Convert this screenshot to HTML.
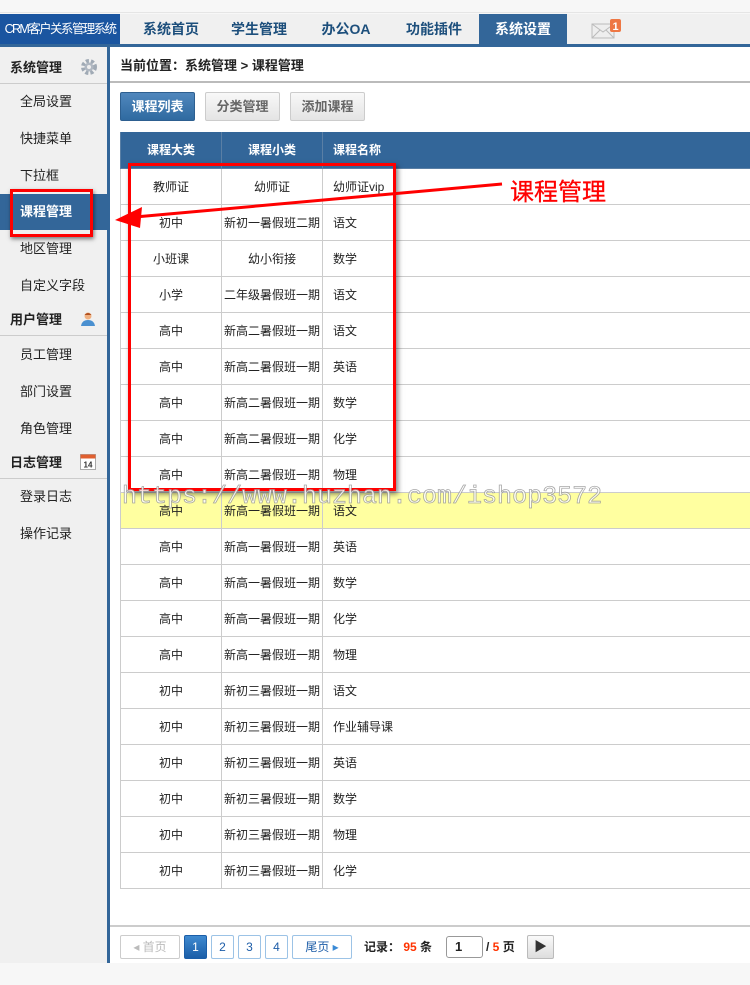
<!DOCTYPE html>
<html><head><meta charset="utf-8"><style>
*{margin:0;padding:0;box-sizing:border-box}
body{width:750px;height:985px;position:relative;background:#f7f7f7;font-family:"Liberation Sans","Noto Sans CJK SC",sans-serif;font-size:12px;color:#222;overflow:hidden}
.a{position:absolute}
.nav{left:0;top:14px;width:750px;height:30px;background:#f0f0f0}
.navb{left:0;top:44px;width:750px;height:3px;background:#336699}
.logo{left:0;top:14px;width:120px;height:30px;background:#1a55a0;color:#fff;font-size:12.5px;line-height:30px;text-align:center;letter-spacing:-1.6px;white-space:nowrap;overflow:hidden}
.ni{top:14px;height:30px;line-height:30px;font-size:14px;font-weight:bold;color:#1d4f7c;text-align:center}
.side{left:0;top:47px;width:107px;height:916px;background:#f0f0f0}
.sbar{left:107px;top:47px;width:3px;height:916px;background:#336699}
.sh{left:0;width:107px;height:33px;line-height:33px;font-weight:bold;font-size:13px;padding-left:10px;border-bottom:1px solid #ccc}
.si{left:20px;font-size:13px;line-height:20px}
.main{left:110px;top:47px;width:640px;height:916px;background:#fff}
.bc{left:110px;top:47px;width:640px;height:36px;border-bottom:2px solid #bbb;line-height:38px;padding-left:10px;font-weight:bold;font-size:13px}
.btn{top:92px;height:29px;line-height:27px;text-align:center;font-size:13px;font-weight:bold;border:1px solid #ccc;background:linear-gradient(#f8f8f8,#e4e4e4);color:#666;border-radius:2px}
table{position:absolute;left:120px;top:132px;width:631px;border-collapse:collapse}
td,th{height:36px;border:1px solid #ccc;font-size:12px}
th{background:#336699;color:#fff;font-weight:bold;border-color:#5a7fa5;border-top:none}
td.c{text-align:center}
td.l,th.l{text-align:left;padding-left:10px}
tr.y td{background:#ffffa0}
.pg{top:935px;height:24px;line-height:22px;border:1px solid #9cc3e6;border-radius:2px;text-align:center;color:#1d5da8;font-size:12px;background:#fff}
</style></head><body>
<div class="a" style="left:0;top:12px;width:750px;height:1px;background:#e5e5e5"></div>
<div class="a nav"></div>
<div class="a navb"></div>
<div class="a logo">CRM客户关系管理系统</div>
<div class="a ni" style="left:130px;width:82px">系统首页</div>
<div class="a ni" style="left:218px;width:82px">学生管理</div>
<div class="a ni" style="left:305px;width:82px">办公OA</div>
<div class="a ni" style="left:393px;width:82px">功能插件</div>
<div class="a ni" style="left:479px;width:88px;background:#336699;color:#fff">系统设置</div>
<svg class="a" style="left:591px;top:18px" width="36" height="22"><rect x="1" y="6" width="22" height="14" fill="#eee" stroke="#bbb"/><path d="M1 6 L12 14 L23 6 M1 20 L9 12 M23 20 L15 12" stroke="#bbb" fill="none"/><rect x="19" y="1" width="11" height="13" rx="2" fill="#ee7744"/><text x="24.5" y="12" font-size="11" font-weight="bold" fill="#fff" text-anchor="middle" font-family="Liberation Sans">1</text></svg>

<div class="a side"></div>
<div class="a sbar"></div>
<div class="a sh" style="top:51px">系统管理</div>
<svg class="a" style="left:80px;top:58px" width="18" height="18"><circle cx="9" cy="9" r="6" fill="none" stroke="#a0aab5" stroke-width="4" stroke-dasharray="3 2"/><circle cx="9" cy="9" r="4.5" fill="#b0b8c2"/><circle cx="9" cy="9" r="2" fill="#eee"/></svg>
<div class="a si" style="top:92px">全局设置</div>
<div class="a si" style="top:129px">快捷菜单</div>
<div class="a si" style="top:166px">下拉框</div>
<div class="a" style="left:0;top:194px;width:107px;height:36px;background:#336699"></div>
<div class="a si" style="top:202px;color:#fff;font-weight:bold">课程管理</div>
<div class="a" style="left:10px;top:189px;width:83px;height:48px;border:3px solid #f00;box-shadow:1px 2px 4px rgba(0,0,0,.5)"></div>
<div class="a si" style="top:239px">地区管理</div>
<div class="a si" style="top:276px">自定义字段</div>
<div class="a sh" style="top:303px;height:33px">用户管理</div>
<svg class="a" style="left:80px;top:311px" width="16" height="16"><circle cx="8" cy="5" r="3.5" fill="#f0b080"/><path d="M4.5 4 Q8 0 11.5 4" fill="#b05020"/><path d="M1 15 Q2 9 8 9 Q14 9 15 15Z" fill="#4a90d0"/></svg>
<div class="a si" style="top:345px">员工管理</div>
<div class="a si" style="top:382px">部门设置</div>
<div class="a si" style="top:419px">角色管理</div>
<div class="a sh" style="top:446px;height:33px">日志管理</div>
<svg class="a" style="left:80px;top:453px" width="16" height="17"><rect x="0.5" y="1.5" width="15" height="15" fill="#fff" stroke="#aaa"/><rect x="0.5" y="1.5" width="15" height="4" fill="#e06030"/><text x="8" y="14.5" font-size="8" font-weight="bold" text-anchor="middle" fill="#333" font-family="Liberation Sans">14</text></svg>
<div class="a si" style="top:487px">登录日志</div>
<div class="a si" style="top:524px">操作记录</div>

<div class="a main"></div>
<div class="a bc">当前位置：系统管理 &gt; 课程管理</div>
<div class="a btn" style="left:120px;width:75px;background:linear-gradient(#5087bd,#2f6aa0);color:#fff;border-color:#2d5f90">课程列表</div>
<div class="a btn" style="left:205px;width:75px">分类管理</div>
<div class="a btn" style="left:290px;width:75px">添加课程</div>

<table>
<tr><th style="width:101px">课程大类</th><th style="width:101px">课程小类</th><th class="l">课程名称</th></tr>
<tr><td class="c">教师证</td><td class="c">幼师证</td><td class="l">幼师证vip</td></tr>
<tr><td class="c">初中</td><td class="c">新初一暑假班二期</td><td class="l">语文</td></tr>
<tr><td class="c">小班课</td><td class="c">幼小衔接</td><td class="l">数学</td></tr>
<tr><td class="c">小学</td><td class="c">二年级暑假班一期</td><td class="l">语文</td></tr>
<tr><td class="c">高中</td><td class="c">新高二暑假班一期</td><td class="l">语文</td></tr>
<tr><td class="c">高中</td><td class="c">新高二暑假班一期</td><td class="l">英语</td></tr>
<tr><td class="c">高中</td><td class="c">新高二暑假班一期</td><td class="l">数学</td></tr>
<tr><td class="c">高中</td><td class="c">新高二暑假班一期</td><td class="l">化学</td></tr>
<tr><td class="c">高中</td><td class="c">新高二暑假班一期</td><td class="l">物理</td></tr>
<tr class="y"><td class="c">高中</td><td class="c">新高一暑假班一期</td><td class="l">语文</td></tr>
<tr><td class="c">高中</td><td class="c">新高一暑假班一期</td><td class="l">英语</td></tr>
<tr><td class="c">高中</td><td class="c">新高一暑假班一期</td><td class="l">数学</td></tr>
<tr><td class="c">高中</td><td class="c">新高一暑假班一期</td><td class="l">化学</td></tr>
<tr><td class="c">高中</td><td class="c">新高一暑假班一期</td><td class="l">物理</td></tr>
<tr><td class="c">初中</td><td class="c">新初三暑假班一期</td><td class="l">语文</td></tr>
<tr><td class="c">初中</td><td class="c">新初三暑假班一期</td><td class="l">作业辅导课</td></tr>
<tr><td class="c">初中</td><td class="c">新初三暑假班一期</td><td class="l">英语</td></tr>
<tr><td class="c">初中</td><td class="c">新初三暑假班一期</td><td class="l">数学</td></tr>
<tr><td class="c">初中</td><td class="c">新初三暑假班一期</td><td class="l">物理</td></tr>
<tr><td class="c">初中</td><td class="c">新初三暑假班一期</td><td class="l">化学</td></tr>
</table>

<div class="a" style="left:128px;top:163px;width:268px;height:328px;border:3px solid #f00;box-shadow:2px 3px 5px rgba(0,0,0,.5)"></div>
<svg class="a" style="left:0;top:0" width="750" height="985">
<line x1="502" y1="184" x2="135" y2="217" stroke="#f00" stroke-width="3"/>
<polygon points="115,220 142,207 140,228" fill="#f00"/>
<text x="510" y="200" font-size="24" fill="#f00" stroke="#f00" stroke-width="0.3" font-family="Liberation Sans,Noto Sans CJK SC,sans-serif">课程管理</text>
<text x="122" y="503" font-size="25" fill="#fff" stroke="#999" stroke-width="0.8" font-family="Liberation Mono,monospace" opacity="0.85">https://www.huzhan.com/ishop3572</text>
</svg>

<div class="a" style="left:110px;top:925px;width:640px;height:2px;background:#ccc"></div>
<div class="a pg" style="left:120px;width:60px;color:#bbb;border-color:#ccc">◂ 首页</div>
<div class="a pg" style="left:184px;width:23px;background:linear-gradient(#3f8ad0,#1b5ea8);color:#fff;border-color:#1b5ea8">1</div>
<div class="a pg" style="left:211px;width:23px">2</div>
<div class="a pg" style="left:238px;width:23px">3</div>
<div class="a pg" style="left:265px;width:23px">4</div>
<div class="a pg" style="left:292px;width:60px">尾页 <span style="color:#3a8ad6">▸</span></div>
<div class="a" style="left:364px;top:935px;line-height:24px;font-weight:bold;font-size:12px">记录： <span style="color:#f30">95</span> 条</div>
<div class="a" style="left:446px;top:936px;width:37px;height:22px;border:1px solid #999;border-radius:3px;background:#fff;line-height:20px;padding-left:8px;font-weight:bold;font-size:13px">1</div>
<div class="a" style="left:486px;top:935px;line-height:24px;font-weight:bold;font-size:12px">/ <span style="color:#f30">5</span> 页</div>
<div class="a" style="left:527px;top:935px;width:27px;height:24px;border:1px solid #bbb;border-radius:2px;background:linear-gradient(#fafafa,#ddd);text-align:center;line-height:22px;font-size:13px;color:#333">▶</div>
</body></html>
